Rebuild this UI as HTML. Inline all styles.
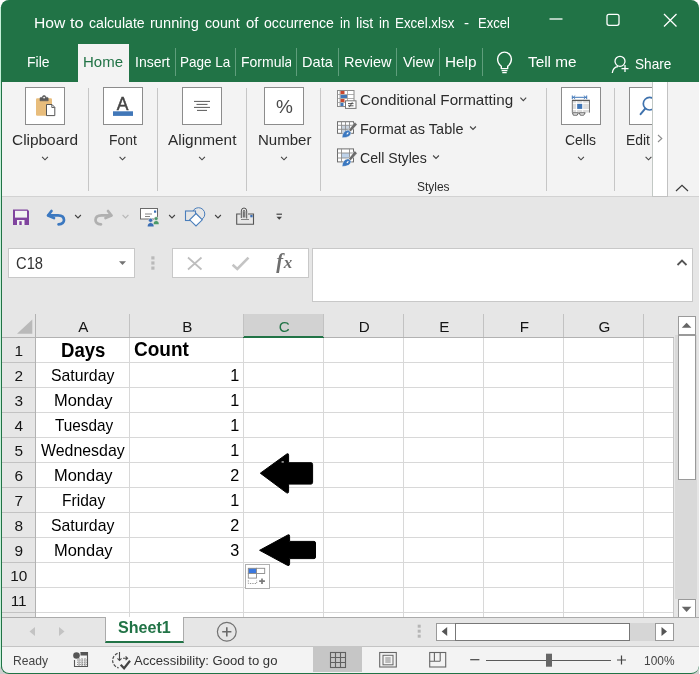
<!DOCTYPE html>
<html><head><meta charset="utf-8">
<style>
*{box-sizing:border-box;margin:0;padding:0}
html,body{width:700px;height:674px;overflow:hidden;background:#fff}
body{font-family:"Liberation Sans",sans-serif;position:relative;color:#222}
.a{position:absolute}
.t{position:absolute;white-space:pre;height:20px;line-height:20px;transform-origin:0 0}
#clip{position:absolute;left:1px;top:0;width:698px;height:674px;border-radius:8px;overflow:hidden;background:#217346}
#win{position:absolute;left:-1px;top:0;width:700px;height:674px;will-change:transform}
#mint{position:absolute;left:0;top:7px;width:2px;height:660px;background:#c4f0d8}
svg{position:absolute;overflow:visible}
</style></head><body>
<div class="a" style="left:0;top:664px;width:10px;height:10px;background:#cfcfcf"></div><div class="a" style="left:690px;top:664px;width:9px;height:10px;background:#cfcfcf"></div><div id="mint"></div><div id="clip"><div id="win">
<div class="t" style="left:34.30px;top:13.23px;font-size:15.20px;color:#fff;transform:scaleX(1.0313);">How</div>
<div class="t" style="left:70.00px;top:13.23px;font-size:15.20px;color:#fff;transform:scaleX(1.0807);">to</div>
<div class="t" style="left:88.90px;top:13.23px;font-size:15.20px;color:#fff;transform:scaleX(0.9284);">calculate</div>
<div class="t" style="left:150.20px;top:13.23px;font-size:15.20px;color:#fff;transform:scaleX(0.9624);">running</div>
<div class="t" style="left:204.60px;top:13.23px;font-size:15.20px;color:#fff;transform:scaleX(0.9333);">count</div>
<div class="t" style="left:245.50px;top:13.23px;font-size:15.20px;color:#fff;transform:scaleX(0.9837);">of</div>
<div class="t" style="left:263.90px;top:13.23px;font-size:15.20px;color:#fff;transform:scaleX(0.9309);">occurrence</div>
<div class="t" style="left:340.00px;top:13.23px;font-size:15.20px;color:#fff;transform:scaleX(0.8541);">in</div>
<div class="t" style="left:356.20px;top:13.23px;font-size:15.20px;color:#fff;transform:scaleX(0.9314);">list</div>
<div class="t" style="left:378.70px;top:13.23px;font-size:15.20px;color:#fff;transform:scaleX(0.8794);">in</div>
<div class="t" style="left:395.20px;top:13.23px;font-size:15.20px;color:#fff;transform:scaleX(0.8792);">Excel.xlsx</div>
<div class="t" style="left:463.90px;top:13.23px;font-size:15.20px;color:#fff;">-</div>
<div class="t" style="left:477.90px;top:13.23px;font-size:15.20px;color:#fff;transform:scaleX(0.8584);">Excel</div>
<svg style="left:540px;top:0" width="160" height="44" viewBox="540 0 160 44">
 <path d="M549.5 19H562.5" stroke="#fff" stroke-width="1.3" fill="none"/>
 <rect x="607" y="14.3" width="12" height="11" rx="2" stroke="#fff" stroke-width="1.3" fill="none"/>
 <path d="M664 14L676.5 26.5M676.5 14L664 26.5" stroke="#fff" stroke-width="1.3" fill="none"/>
</svg>
<div class="a" style="left:78px;top:44px;width:50.5px;height:39px;background:#f3f3f3;"></div>
<div class="t" style="left:27.00px;top:52.20px;font-size:15.00px;color:#fff;transform:scaleX(0.9311);">File</div>
<div class="t" style="left:82.50px;top:52.20px;font-size:15.00px;color:#217346;transform:scaleX(0.9995);">Home</div>
<div class="t" style="left:134.50px;top:52.20px;font-size:15.00px;color:#fff;transform:scaleX(0.9330);">Insert</div>
<div class="t" style="left:180.30px;top:52.20px;font-size:15.00px;color:#fff;transform:scaleX(0.9000);">Page La</div>
<div class="a" style="left:237px;top:44px;width:54.200px;height:36px;overflow:hidden"><div class="t" style="left:3.70px;top:8.20px;font-size:15.00px;color:#fff;transform:scaleX(0.9324);">Formula</div></div>
<div class="t" style="left:301.70px;top:52.20px;font-size:15.00px;color:#fff;transform:scaleX(0.9718);">Data</div>
<div class="t" style="left:343.50px;top:52.20px;font-size:15.00px;color:#fff;transform:scaleX(0.9649);">Review</div>
<div class="t" style="left:402.50px;top:52.20px;font-size:15.00px;color:#fff;transform:scaleX(0.9603);">View</div>
<div class="t" style="left:445.00px;top:52.20px;font-size:15.00px;color:#fff;transform:scaleX(1.0209);">Help</div>
<div class="t" style="left:527.90px;top:52.20px;font-size:15.00px;color:#fff;transform:scaleX(1.0227);">Tell me</div>
<div class="t" style="left:634.60px;top:54.20px;font-size:15.00px;color:#fff;transform:scaleX(0.9095);">Share</div>
<div class="a" style="left:174.5px;top:47.5px;width:1px;height:28.5px;background:#5f9e7c;"></div>
<div class="a" style="left:235px;top:47.5px;width:1px;height:28.5px;background:#5f9e7c;"></div>
<div class="a" style="left:295.5px;top:47.5px;width:1px;height:28.5px;background:#5f9e7c;"></div>
<div class="a" style="left:337.5px;top:47.5px;width:1px;height:28.5px;background:#5f9e7c;"></div>
<div class="a" style="left:396px;top:47.5px;width:1px;height:28.5px;background:#5f9e7c;"></div>
<div class="a" style="left:438.5px;top:47.5px;width:1px;height:28.5px;background:#5f9e7c;"></div>
<div class="a" style="left:482px;top:47.5px;width:1px;height:28.5px;background:#5f9e7c;"></div>
<div class="a" style="left:2px;top:82px;width:697px;height:115px;background:#f3f3f3;"></div>
<div class="a" style="left:2px;top:196px;width:697px;height:1px;background:#d2d2d2;"></div>
<div class="a" style="left:25px;top:87px;width:40px;height:38px;background:#fff;border:1px solid #8c8c8c"></div>
<div class="a" style="left:103px;top:87px;width:40px;height:38px;background:#fff;border:1px solid #8c8c8c"></div>
<div class="a" style="left:182px;top:87px;width:40px;height:38px;background:#fff;border:1px solid #8c8c8c"></div>
<div class="a" style="left:264px;top:87px;width:40px;height:38px;background:#fff;border:1px solid #8c8c8c"></div>
<div class="a" style="left:561px;top:87px;width:40px;height:38px;background:#fff;border:1px solid #8c8c8c"></div>
<div class="a" style="left:629px;top:87px;width:30px;height:38px;background:#fff;border:1px solid #8c8c8c;border-right:none"></div>
<div class="t" style="left:12.00px;top:130.01px;font-size:14.40px;color:#2b2b2b;transform:scaleX(1.0709);">Clipboard</div>
<div class="t" style="left:108.80px;top:130.01px;font-size:14.40px;color:#2b2b2b;transform:scaleX(0.9648);">Font</div>
<div class="t" style="left:167.50px;top:130.01px;font-size:14.40px;color:#2b2b2b;transform:scaleX(1.0697);">Alignment</div>
<div class="t" style="left:257.50px;top:130.01px;font-size:14.40px;color:#2b2b2b;transform:scaleX(1.0445);">Number</div>
<div class="t" style="left:565.00px;top:130.01px;font-size:14.40px;color:#2b2b2b;transform:scaleX(0.9684);">Cells</div>
<div class="t" style="left:626.00px;top:130.01px;font-size:14.40px;color:#2b2b2b;transform:scaleX(0.9673);">Edit</div>
<div class="a" style="left:88px;top:88px;width:1px;height:103px;background:#c6c6c6;"></div>
<div class="a" style="left:156.5px;top:88px;width:1px;height:103px;background:#c6c6c6;"></div>
<div class="a" style="left:245.5px;top:88px;width:1px;height:103px;background:#c6c6c6;"></div>
<div class="a" style="left:320px;top:88px;width:1px;height:103px;background:#c6c6c6;"></div>
<div class="a" style="left:545.5px;top:88px;width:1px;height:103px;background:#c6c6c6;"></div>
<div class="a" style="left:613.5px;top:88px;width:1px;height:103px;background:#c6c6c6;"></div>
<div class="t" style="left:360.20px;top:89.81px;font-size:14.40px;color:#2b2b2b;transform:scaleX(1.0574);">Conditional Formatting</div>
<div class="t" style="left:360.20px;top:118.71px;font-size:14.40px;color:#2b2b2b;transform:scaleX(1.0051);">Format as Table</div>
<div class="t" style="left:360.20px;top:147.81px;font-size:14.40px;color:#2b2b2b;transform:scaleX(0.9820);">Cell Styles</div>
<div class="t" style="left:416.90px;top:176.86px;font-size:12.80px;color:#2b2b2b;transform:scaleX(0.9353);">Styles</div>
<svg style="left:0;top:80px" width="700" height="120" viewBox="0 80 700 120"><rect x="36" y="98.3" width="16" height="17.5" rx="1.2" fill="#e8bd7c"/><path d="M40 100.8V98.2Q40 97.4 40.8 97.4H42.3Q42.3 95.4 44.1 95.4Q45.9 95.4 45.9 97.4H47.4Q48.2 97.4 48.2 98.2V100.8Z" fill="#5a5a5a" stroke="#5a5a5a" stroke-width="0.6"/><circle cx="44.1" cy="97.6" r="0.9" fill="#fff"/><path d="M46.5 104.5H52L54.8 107.3V115.6H46.5Z" fill="#fff" stroke="#555" stroke-width="1"/><path d="M51.8 104.6V107.5H54.7" fill="none" stroke="#555" stroke-width="0.9"/><rect x="113" y="111.3" width="20" height="4.6" fill="#4177b8"/><path d="M194 101.4H210" stroke="#595959" stroke-width="1"/><path d="M196.5 104.4H207.5" stroke="#595959" stroke-width="1"/><path d="M194 107.4H210" stroke="#595959" stroke-width="1"/><path d="M197 110.4H207" stroke="#595959" stroke-width="1"/><path d="M42.1 156.8L45.0 159.8L47.9 156.8" stroke="#444" stroke-width="1.1" fill="none"/><path d="M119.6 156.8L122.5 159.8L125.4 156.8" stroke="#444" stroke-width="1.1" fill="none"/><path d="M199.1 156.8L202.0 159.8L204.9 156.8" stroke="#444" stroke-width="1.1" fill="none"/><path d="M281.1 156.8L284.0 159.8L286.9 156.8" stroke="#444" stroke-width="1.1" fill="none"/><path d="M578.1 156.8L581.0 159.8L583.9 156.8" stroke="#444" stroke-width="1.1" fill="none"/><path d="M645.6 156.8L648.5 159.8L651.4 156.8" stroke="#444" stroke-width="1.1" fill="none"/><path d="M520.4 97.7L523.3 100.7L526.2 97.7" stroke="#444" stroke-width="1.1" fill="none"/><path d="M470.1 126.5L473.0 129.5L475.9 126.5" stroke="#444" stroke-width="1.1" fill="none"/><path d="M433.1 155.5L436.0 158.5L438.9 155.5" stroke="#444" stroke-width="1.1" fill="none"/><rect x="337.5" y="90.5" width="16.5" height="16" fill="#fff" stroke="#8a8a8a" stroke-width="1"/><path d="M337.5 94.5H354M337.5 98.5H354M337.5 102.5H354M340 90.5V106.5M347.5 90.5V106.5" stroke="#9a9a9a" stroke-width="0.8" fill="none"/><rect x="340.5" y="91" width="4" height="3" fill="#c9472f"/><rect x="340.5" y="95" width="6.5" height="3" fill="#4177b8"/><rect x="340.5" y="99" width="4" height="3" fill="#c9472f"/><rect x="340.5" y="103" width="3" height="3" fill="#4177b8"/><rect x="345.5" y="100.8" width="10.5" height="7.6" fill="#fff" stroke="#777" stroke-width="1"/><path d="M348 103.6H353.5M348 105.8H353.5M352.3 102.3L349.3 107.1" stroke="#444" stroke-width="0.9"/><rect x="337.5" y="121.700" width="16" height="11.600" fill="#fff" stroke="#6e6e6e" stroke-width="1"/><rect x="341.500" y="125.300" width="8" height="8" fill="#c9d3df"/><path d="M337.500 125.300H353.500M337.500 129.300H353.500M341.500 121.700V133.300M345.500 121.700V133.300M349.500 121.700V133.300" stroke="#8c8c8c" stroke-width="0.900" fill="none"/><path d="M357.2 124.6L354.800 122.0L348.700 130.0L350.700 131.8Z" fill="#6b6b6b" stroke="#f3f3f3" stroke-width="0.500"/><path d="M351.100 132.4Q351 137.8 342 137.8Q342.600 130.6 348.200 130.0Z" fill="#3b78c0" stroke="#f3f3f3" stroke-width="0.500"/><ellipse cx="347.600" cy="133.4" rx="0.700" ry="1.300" transform="rotate(40 347.600 133.4)" fill="#fff"/><rect x="337.500" y="148.900" width="16" height="13" fill="#fff" stroke="#6e6e6e" stroke-width="1"/><rect x="341.500" y="153" width="8" height="5" fill="#bfd3ea"/><path d="M337.500 153H353.500M337.500 158H353.500M341.500 148.900V161.900M349.500 148.900V161.900" stroke="#8c8c8c" stroke-width="0.900" fill="none"/><path d="M357.2 153.3L354.800 150.7L348.700 158.7L350.700 160.5Z" fill="#6b6b6b" stroke="#f3f3f3" stroke-width="0.500"/><path d="M351.100 161.1Q351 166.5 342 166.5Q342.600 159.3 348.200 158.7Z" fill="#3b78c0" stroke="#f3f3f3" stroke-width="0.500"/><ellipse cx="347.600" cy="162.1" rx="0.700" ry="1.300" transform="rotate(40 347.600 162.1)" fill="#fff"/><path d="M572.3 97.3H586.7M572.3 95.5V99.1M586.7 95.5V99.1" stroke="#4177b8" stroke-width="1" fill="none"/><path d="M575.2 95.7L573.2 97.3L575.2 98.9M583.8 95.7L585.8 97.3L583.8 98.9" stroke="#4177b8" stroke-width="0.9" fill="none"/><rect x="572.3" y="100.6" width="17.2" height="12" fill="#dedede"/><path d="M576.6 100.6V112.600M582.700 100.600V112.600M572.300 103.300H589.500M572.300 109.500H589.500" stroke="#fff" stroke-width="1" fill="none"/><rect x="577.2" y="103.9" width="5" height="5" fill="#4177b8"/><path d="M572.3 112.6V100.500H589.500V112.600" fill="none" stroke="#777" stroke-width="1"/><path d="M572 100.400H589.800" stroke="#5a5a5a" stroke-width="1.300"/><path d="M572.5 112.800H578.500L577.200 115.200H573.300Z M579.300 112.800H585.200L583.700 115.200H580.300Z" fill="#f3f3f3" stroke="#555" stroke-width="0.900"/><circle cx="649.6" cy="103.7" r="6.3" fill="none" stroke="#3f72ad" stroke-width="1.7"/><path d="M645.2 108.700L640.600 114.200" stroke="#3f72ad" stroke-width="2" stroke-linecap="round"/></svg>
<div class="t" style="left:116.80px;top:93.54px;font-size:17.50px;color:#444;-webkit-text-stroke:0.45px #444;">A</div>
<div class="t" style="left:276.00px;top:96.92px;font-size:19.00px;color:#4a4a4a;">%</div>
<div class="a" style="left:652px;top:82px;width:15.5px;height:115px;background:#fff;border-left:1px solid #c2c8c4;border-right:1px solid #c2c2c2;border-bottom:1px solid #c2c2c2"></div>
<svg style="left:640px;top:80px" width="60" height="120" viewBox="640 80 60 120"><path d="M658 135L661.8 138.5L658 142" stroke="#8a8a8a" stroke-width="1.1" fill="none"/><path d="M676 191L682 185.3L688 191" stroke="#3a3a3a" stroke-width="1.2" fill="none"/></svg>
<svg style="left:480px;top:44px" width="160" height="38" viewBox="480 44 160 38"><path d="M501.300 68.600V66.300Q497.600 63.500 497.600 59A6.900 6.900 0 0 1 511.400 59Q511.400 63.500 507.700 66.300V68.600Z" fill="none" stroke="#fff" stroke-width="1.400" stroke-linejoin="round"/><path d="M501.600 70.700H507.400M502.300 72.600H506.700" stroke="#fff" stroke-width="1.200"/><circle cx="620" cy="61.3" r="5" fill="none" stroke="#fff" stroke-width="1.3"/><path d="M612.3 73Q613 67 618 66.600" fill="none" stroke="#fff" stroke-width="1.3"/><path d="M621.5 68.600H628.5M625 65.100V72.100" stroke="#fff" stroke-width="1.3"/></svg>
<div class="a" style="left:2px;top:197px;width:697px;height:449px;background:#e6e6e6;"></div>
<svg style="left:0;top:200px" width="300" height="40" viewBox="0 200 300 40"><path d="M13 209.500H27.500L29 211V225H13Z" fill="#80449e"/><rect x="15" y="210.800" width="12" height="6.800" fill="#f2f2f2"/><rect x="17" y="220" width="7.500" height="5" fill="#f2f2f2"/><rect x="19.300" y="221.200" width="2.400" height="3.800" fill="#80449e"/><path d="M51.500 211L48 215.500L54 218" fill="none" stroke="#3b78c0" stroke-width="2.700" stroke-linejoin="round" stroke-linecap="round"/><path d="M48.500 215.300H58Q64 215.300 64 220Q64 224 58.500 224.300" fill="none" stroke="#3b78c0" stroke-width="2.700" stroke-linecap="round"/><path d="M75.1 215.0L78.0 218.0L80.9 215.0" stroke="#444" stroke-width="1.1" fill="none"/><path d="M108 211L111.500 215.500L105.500 218" fill="none" stroke="#b0b0b0" stroke-width="2.700" stroke-linejoin="round" stroke-linecap="round"/><path d="M111 215.300H101.500Q95.500 215.300 95.500 220Q95.500 224 101 224.300" fill="none" stroke="#b0b0b0" stroke-width="2.700" stroke-linecap="round"/><path d="M122.6 215.0L125.5 218.0L128.4 215.0" stroke="#b8b8b8" stroke-width="1.1" fill="none"/><rect x="140.500" y="208.500" width="17" height="10.500" fill="#fff" stroke="#6a6a6a" stroke-width="1"/><rect x="154" y="210.500" width="2.200" height="2.200" fill="#3b6eb5"/><path d="M145 214H152M145 216.500H150" stroke="#777" stroke-width="0.900"/><circle cx="150.600" cy="220.300" r="2.100" fill="#3b6eb5" stroke="#e6e6e6" stroke-width="0.600"/><path d="M147.600 226.500Q147.600 222.900 150.600 222.900Q153.700 222.900 153.700 226.500Z" fill="#3b6eb5"/><circle cx="156.100" cy="218.600" r="1.900" fill="#4c9a6a" stroke="#e6e6e6" stroke-width="0.600"/><path d="M153.600 224.200Q153.600 221 156.100 221Q158.800 221 158.800 224.200Z" fill="#4c9a6a"/><path d="M169.1 215.0L172.0 218.0L174.9 215.0" stroke="#444" stroke-width="1.1" fill="none"/><circle cx="198.500" cy="214" r="6.300" fill="none" stroke="#4a7ebb" stroke-width="1"/><rect x="185.500" y="211" width="10" height="9.500" fill="#e6e6e6" stroke="#4a7ebb" stroke-width="1.100"/><path d="M196 213.500L202.300 219.800L196 226L189.700 219.800Z" fill="#fff" stroke="#4a7ebb" stroke-width="1.100"/><path d="M215.1 215.0L218.0 218.0L220.9 215.0" stroke="#444" stroke-width="1.1" fill="none"/><path d="M240.500 214H236.700V224.300H253.500V214H248" fill="none" stroke="#555" stroke-width="1.100"/><path d="M241 219.500H249" stroke="#777" stroke-width="0.900"/><rect x="250.300" y="215" width="2.300" height="2.300" fill="#3b6eb5"/><path d="M241.300 218V211Q241.300 208 244 208Q246.700 208 246.700 211V218.500M243.300 217.500V211.500Q243.300 210.300 244 210.300Q244.800 210.300 244.800 211.500V217.500" fill="none" stroke="#555" stroke-width="1"/><path d="M276.500 214.200H282" stroke="#444" stroke-width="1.200"/><path d="M276.500 216.700L279.250 219.700L282 216.700Z" fill="#444"/></svg>
<div class="a" style="left:8px;top:248px;width:127px;height:30px;background:#fff;border:1px solid #c8c8c8"></div>
<div class="t" style="left:15.50px;top:253.66px;font-size:16.00px;color:#333;transform:scaleX(0.9201);">C18</div>
<div class="a" style="left:172px;top:248px;width:137px;height:30px;background:#fff;border:1px solid #c8c8c8"></div>
<div class="a" style="left:312px;top:248px;width:381px;height:54px;background:#fff;border:1px solid #c8c8c8"></div>
<svg style="left:100px;top:245px" width="600" height="40" viewBox="100 245 600 40"><path d="M119 261.300L122.500 265L126 261.300Z" fill="#737373"/><rect x="151.300" y="256.3" width="3.200" height="3.200" fill="#b9b9b9"/><rect x="151.300" y="261.4" width="3.200" height="3.200" fill="#b9b9b9"/><rect x="151.300" y="266.5" width="3.200" height="3.200" fill="#b9b9b9"/><path d="M188 257.500L201.500 269.500M201.500 257.500L188 269.500" stroke="#bebebe" stroke-width="1.700" fill="none"/><path d="M232.600 264.800L237.300 269L248.500 257.600" stroke="#c4c4c4" stroke-width="2.600" fill="none"/><path d="M677.500 265L682 260.500L686.500 265" stroke="#555" stroke-width="1.800" fill="none"/></svg>
<div class="t" style="left:276.30px;top:251.38px;font-size:20.50px;color:#6e6e6e;font-weight:bold;font-family:'Liberation Serif',serif;font-style:italic;">f</div>
<div class="t" style="left:283.82px;top:252.86px;font-size:17.00px;color:#6e6e6e;font-weight:bold;font-family:'Liberation Serif',serif;font-style:italic;">x</div>
<div class="a" style="left:2px;top:338px;width:672px;height:279px;background:#fff;"></div>
<div class="a" style="left:2px;top:338px;width:33px;height:279px;background:#e6e6e6;"></div>
<div class="a" style="left:243.3px;top:314px;width:80.7px;height:23px;background:#d2d2d2;"></div>
<div class="a" style="left:2px;top:337px;width:672px;height:1px;background:#b2b2b2;"></div>
<div class="a" style="left:243.3px;top:335.8px;width:80.7px;height:2px;background:#217346;"></div>
<div class="a" style="left:35px;top:314px;width:1px;height:303px;background:#b2b2b2;"></div>
<div class="a" style="left:129px;top:314px;width:1px;height:23px;background:#c2c2c2;"></div>
<div class="a" style="left:129px;top:338px;width:1px;height:279px;background:#d8d8d8;"></div>
<div class="t" style="left:78.23px;top:317.03px;font-size:15.20px;color:#151515;">A</div>
<div class="a" style="left:243px;top:314px;width:1px;height:23px;background:#c2c2c2;"></div>
<div class="a" style="left:243px;top:338px;width:1px;height:279px;background:#d8d8d8;"></div>
<div class="t" style="left:182.23px;top:317.03px;font-size:15.20px;color:#151515;">B</div>
<div class="a" style="left:323px;top:314px;width:1px;height:23px;background:#c2c2c2;"></div>
<div class="a" style="left:323px;top:338px;width:1px;height:279px;background:#d8d8d8;"></div>
<div class="t" style="left:278.81px;top:317.03px;font-size:15.20px;color:#217346;">C</div>
<div class="a" style="left:403px;top:314px;width:1px;height:23px;background:#c2c2c2;"></div>
<div class="a" style="left:403px;top:338px;width:1px;height:279px;background:#d8d8d8;"></div>
<div class="t" style="left:358.81px;top:317.03px;font-size:15.20px;color:#151515;">D</div>
<div class="a" style="left:483px;top:314px;width:1px;height:23px;background:#c2c2c2;"></div>
<div class="a" style="left:483px;top:338px;width:1px;height:279px;background:#d8d8d8;"></div>
<div class="t" style="left:439.23px;top:317.03px;font-size:15.20px;color:#151515;">E</div>
<div class="a" style="left:563px;top:314px;width:1px;height:23px;background:#c2c2c2;"></div>
<div class="a" style="left:563px;top:338px;width:1px;height:279px;background:#d8d8d8;"></div>
<div class="t" style="left:519.66px;top:317.03px;font-size:15.20px;color:#151515;">F</div>
<div class="a" style="left:643px;top:314px;width:1px;height:23px;background:#c2c2c2;"></div>
<div class="a" style="left:643px;top:338px;width:1px;height:279px;background:#d8d8d8;"></div>
<div class="t" style="left:598.39px;top:317.03px;font-size:15.20px;color:#151515;">G</div>
<div class="a" style="left:2px;top:362px;width:33px;height:1px;background:#c2c2c2;"></div>
<div class="a" style="left:36px;top:362px;width:638px;height:1px;background:#d8d8d8;"></div>
<div class="t" style="left:14.42px;top:341.06px;font-size:15.40px;color:#151515;">1</div>
<div class="a" style="left:2px;top:387px;width:33px;height:1px;background:#c2c2c2;"></div>
<div class="a" style="left:36px;top:387px;width:638px;height:1px;background:#d8d8d8;"></div>
<div class="t" style="left:14.42px;top:366.06px;font-size:15.40px;color:#151515;">2</div>
<div class="a" style="left:2px;top:412px;width:33px;height:1px;background:#c2c2c2;"></div>
<div class="a" style="left:36px;top:412px;width:638px;height:1px;background:#d8d8d8;"></div>
<div class="t" style="left:14.42px;top:391.06px;font-size:15.40px;color:#151515;">3</div>
<div class="a" style="left:2px;top:437px;width:33px;height:1px;background:#c2c2c2;"></div>
<div class="a" style="left:36px;top:437px;width:638px;height:1px;background:#d8d8d8;"></div>
<div class="t" style="left:14.42px;top:416.06px;font-size:15.40px;color:#151515;">4</div>
<div class="a" style="left:2px;top:462px;width:33px;height:1px;background:#c2c2c2;"></div>
<div class="a" style="left:36px;top:462px;width:638px;height:1px;background:#d8d8d8;"></div>
<div class="t" style="left:14.42px;top:441.06px;font-size:15.40px;color:#151515;">5</div>
<div class="a" style="left:2px;top:487px;width:33px;height:1px;background:#c2c2c2;"></div>
<div class="a" style="left:36px;top:487px;width:638px;height:1px;background:#d8d8d8;"></div>
<div class="t" style="left:14.42px;top:466.06px;font-size:15.40px;color:#151515;">6</div>
<div class="a" style="left:2px;top:512px;width:33px;height:1px;background:#c2c2c2;"></div>
<div class="a" style="left:36px;top:512px;width:638px;height:1px;background:#d8d8d8;"></div>
<div class="t" style="left:14.42px;top:491.06px;font-size:15.40px;color:#151515;">7</div>
<div class="a" style="left:2px;top:537px;width:33px;height:1px;background:#c2c2c2;"></div>
<div class="a" style="left:36px;top:537px;width:638px;height:1px;background:#d8d8d8;"></div>
<div class="t" style="left:14.42px;top:516.06px;font-size:15.40px;color:#151515;">8</div>
<div class="a" style="left:2px;top:562px;width:33px;height:1px;background:#c2c2c2;"></div>
<div class="a" style="left:36px;top:562px;width:638px;height:1px;background:#d8d8d8;"></div>
<div class="t" style="left:14.42px;top:541.06px;font-size:15.40px;color:#151515;">9</div>
<div class="a" style="left:2px;top:587px;width:33px;height:1px;background:#c2c2c2;"></div>
<div class="a" style="left:36px;top:587px;width:638px;height:1px;background:#d8d8d8;"></div>
<div class="t" style="left:10.14px;top:566.06px;font-size:15.40px;color:#151515;">10</div>
<div class="a" style="left:2px;top:612px;width:33px;height:1px;background:#c2c2c2;"></div>
<div class="a" style="left:36px;top:612px;width:638px;height:1px;background:#d8d8d8;"></div>
<div class="t" style="left:10.71px;top:591.06px;font-size:15.40px;color:#151515;transform:scaleX(1.0000);">11</div>
<div class="a" style="left:673px;top:338px;width:1px;height:279px;background:#c8c8c8;"></div>
<svg style="left:16px;top:319px" width="17" height="16" viewBox="0 0 17 16"><path d="M16.3 0.5V14.7H1Z" fill="#b9b9b9"/></svg>
<div class="t" style="left:61.20px;top:340.27px;font-size:20.00px;color:#000;transform:scaleX(0.9285);font-weight:bold;">Days</div>
<div class="t" style="left:133.50px;top:338.87px;font-size:20.00px;color:#000;transform:scaleX(0.9505);font-weight:bold;">Count</div>
<div class="t" style="left:51.40px;top:365.29px;font-size:16.20px;color:#000;transform:scaleX(0.9779);">Saturday</div>
<div class="t" style="left:230.29px;top:365.29px;font-size:16.20px;color:#000;">1</div>
<div class="t" style="left:54.20px;top:390.29px;font-size:16.20px;color:#000;transform:scaleX(1.0167);">Monday</div>
<div class="t" style="left:230.29px;top:390.29px;font-size:16.20px;color:#000;">1</div>
<div class="t" style="left:54.50px;top:415.29px;font-size:16.20px;color:#000;transform:scaleX(0.9475);">Tuesday</div>
<div class="t" style="left:230.29px;top:415.29px;font-size:16.20px;color:#000;">1</div>
<div class="t" style="left:40.80px;top:440.29px;font-size:16.20px;color:#000;transform:scaleX(0.9829);">Wednesday</div>
<div class="t" style="left:230.29px;top:440.29px;font-size:16.20px;color:#000;">1</div>
<div class="t" style="left:54.20px;top:465.29px;font-size:16.20px;color:#000;transform:scaleX(1.0167);">Monday</div>
<div class="t" style="left:230.29px;top:465.29px;font-size:16.20px;color:#000;">2</div>
<div class="t" style="left:61.70px;top:490.29px;font-size:16.20px;color:#000;transform:scaleX(0.9621);">Friday</div>
<div class="t" style="left:230.29px;top:490.29px;font-size:16.20px;color:#000;">1</div>
<div class="t" style="left:51.40px;top:515.29px;font-size:16.20px;color:#000;transform:scaleX(0.9779);">Saturday</div>
<div class="t" style="left:230.29px;top:515.29px;font-size:16.20px;color:#000;">2</div>
<div class="t" style="left:54.20px;top:540.29px;font-size:16.20px;color:#000;transform:scaleX(1.0167);">Monday</div>
<div class="t" style="left:230.29px;top:540.29px;font-size:16.20px;color:#000;">3</div>
<svg style="left:250px;top:445px" width="80" height="130" viewBox="250 445 80 130"><path d="M260.300 473.200L286.800 454Q288.600 452.900 288.600 455.200V462.700H311Q312.600 462.700 312.600 464.500V482.300Q312.600 484.100 311 484.100H288.600V491.300Q288.600 494 286.300 492.600Z" fill="#000" stroke="#000" stroke-width="1" stroke-linejoin="round"/><rect x="281.600" y="461.400" width="2.200" height="1.100" fill="#e8e8e8"/><path d="M259.600 550.300L287.800 535Q289.600 534 289.600 536.300V541.400H314Q315.500 541.400 315.500 543V557Q315.500 558.600 314 558.600H289.600V563.800Q289.600 566.500 287.200 565.200Z" fill="#000" stroke="#000" stroke-width="1" stroke-linejoin="round"/></svg>
<div class="a" style="left:245px;top:564px;width:25px;height:25px;background:#fff;border:1px solid #b0b0b0"></div>
<svg style="left:245px;top:564px" width="25" height="25" viewBox="245 564 25 25"><rect x="248.300" y="568.300" width="8.200" height="5.200" fill="#3b78de" stroke="#8a8a8a" stroke-width="0.900"/><rect x="256.500" y="568.300" width="8.200" height="5.200" fill="#fff" stroke="#8a8a8a" stroke-width="0.900"/><rect x="248.300" y="573.500" width="8.200" height="4.600" fill="#fff" stroke="#8a8a8a" stroke-width="0.900"/><path d="M248.300 580.300V583.500H256.700V580.300" fill="none" stroke="#8a8a8a" stroke-width="0.900" stroke-dasharray="1.300 1.100"/><path d="M259.200 581.200H264.900M262 578.400V584" stroke="#7a7a7a" stroke-width="1.700"/></svg>
<div class="a" style="left:674px;top:314px;width:25px;height:304px;background:#e6e6e6;"></div>
<div class="a" style="left:675px;top:335px;width:22px;height:264px;background:#d9d9d9;"></div>
<div class="a" style="left:677.5px;top:316px;width:18px;height:19px;background:#fff;border:1px solid #9a9a9a"></div>
<div class="a" style="left:677.5px;top:335px;width:18px;height:145px;background:#fff;border:1px solid #9a9a9a"></div>
<div class="a" style="left:677.5px;top:599px;width:18px;height:19px;background:#fff;border:1px solid #9a9a9a"></div>
<svg style="left:677px;top:316px" width="19" height="302" viewBox="677 316 19 302"><path d="M681.800 327.800L686.600 322.700L691.400 327.800Z" fill="#666"/><path d="M681.800 606.800L686.600 612L691.400 606.800Z" fill="#666"/></svg>
<div class="a" style="left:2px;top:617px;width:697px;height:1px;background:#ababab;"></div>
<div class="a" style="left:105.3px;top:617px;width:78.7px;height:25.7px;background:#fff;border-left:1px solid #ababab;border-right:1px solid #ababab;border-bottom:2.7px solid #217346"></div>
<div class="t" style="left:117.80px;top:618.33px;font-size:15.80px;color:#217346;transform:scaleX(1.0191);font-weight:bold;">Sheet1</div>
<svg style="left:25px;top:622px" width="45" height="20" viewBox="25 622 45 20"><path d="M35 627V636L29.5 631.5Z" fill="#c3c3c3"/><path d="M59 627V636L64.5 631.5Z" fill="#c3c3c3"/></svg>
<svg style="left:215px;top:620px" width="24" height="24" viewBox="215 620 24 24"><circle cx="226.800" cy="631.800" r="9.400" fill="none" stroke="#727272" stroke-width="1.200"/><path d="M222.200 631.800H231.400M226.800 627.200V636.400" stroke="#6a6a6a" stroke-width="1.600"/></svg>
<div class="a" style="left:436px;top:622.5px;width:238px;height:18px;background:#d6d6d6;"></div>
<div class="a" style="left:436px;top:622.5px;width:19.5px;height:18px;background:#fff;border:1px solid #9a9a9a"></div>
<div class="a" style="left:455px;top:622.5px;width:175px;height:18px;background:#fff;border:1px solid #777"></div>
<div class="a" style="left:655px;top:622.5px;width:19px;height:18px;background:#fff;border:1px solid #9a9a9a"></div>
<svg style="left:415px;top:620px" width="260" height="24" viewBox="415 620 260 24"><path d="M447.200 627V636L441.700 631.500Z" fill="#555"/><path d="M661.5 627V636L667 631.5Z" fill="#555"/><rect x="417.7" y="624.7" width="3" height="3" fill="#b5b5b5"/><rect x="417.7" y="629.7" width="3" height="3" fill="#b5b5b5"/><rect x="417.7" y="634.7" width="3" height="3" fill="#b5b5b5"/></svg>
<div class="a" style="left:2px;top:646px;width:697px;height:28px;background:#f3f3f3;"></div>
<div class="a" style="left:2px;top:646px;width:697px;height:1px;background:#c4c4c4;"></div>
<div class="a" style="left:313px;top:646px;width:49px;height:26px;background:#c6c6c6;"></div>
<div class="t" style="left:12.50px;top:651.26px;font-size:13.10px;color:#444;transform:scaleX(0.9242);">Ready</div>
<div class="t" style="left:134.00px;top:651.26px;font-size:13.10px;color:#333;transform:scaleX(1.0004);">Accessibility: Good to go</div>
<div class="t" style="left:644.00px;top:651.26px;font-size:13.10px;color:#444;transform:scaleX(0.9102);">100%</div>
<svg style="left:0;top:645px" width="700" height="29" viewBox="0 645 700 29"><circle cx="76.500" cy="655.500" r="3.300" fill="#555"/><path d="M80.500 652.500H87.500V666.500H74.500V660" fill="none" stroke="#555" stroke-width="1.100"/><rect x="80.500" y="652.500" width="7" height="3" fill="#555"/><path d="M77 660H87M77 662.300H87M77 664.500H87M79 658V666M82 658V666M85 658V666" stroke="#777" stroke-width="0.800" fill="none" stroke-dasharray="1.500 0.800"/><path d="M117.600 653.400A7.500 7.500 0 0 0 118.600 667.800" fill="none" stroke="#4a4a4a" stroke-width="1.200" stroke-dasharray="3 1.400"/><path d="M119.500 652V660.300M117.500 658.300L119.500 660.500L121.500 658.300" fill="none" stroke="#4a4a4a" stroke-width="1.100"/><path d="M123 658.250H127.300M125.600 656.300L127.600 658.250L125.600 660.200" fill="none" stroke="#4a4a4a" stroke-width="1.100"/><path d="M120.700 664.700L124.100 668.300L130 660.800" fill="none" stroke="#444" stroke-width="2.200"/><rect x="330.500" y="652.500" width="15" height="15" fill="none" stroke="#606060" stroke-width="1.100"/><path d="M330.500 657.500H345.500M330.500 662.500H345.500M335.500 652.500V667.500M340.500 652.500V667.500" stroke="#606060" stroke-width="1.100"/><rect x="379.700" y="652.500" width="16.600" height="14.500" fill="none" stroke="#666" stroke-width="1.100"/><rect x="383" y="655.300" width="10" height="9.500" fill="none" stroke="#666" stroke-width="1"/><path d="M385.300 658H390.700M385.300 660H390.700M385.300 662H390.700" stroke="#666" stroke-width="0.800"/><rect x="429.700" y="652.500" width="16" height="14.500" fill="none" stroke="#666" stroke-width="1.100"/><path d="M434.400 652.500V661.300M429.700 661.300H440.200M440.200 652.500V661.300" fill="none" stroke="#666" stroke-width="1.100"/><path d="M470.200 659.700H479.400" stroke="#444" stroke-width="1.200"/><path d="M486 660.500H611" stroke="#5a5a5a" stroke-width="1"/><rect x="546" y="653.700" width="6" height="13" fill="#666"/><path d="M617 660H626M621.500 655.500V664.500" stroke="#444" stroke-width="1.200"/></svg>
<div class="a" style="left:1px;top:0;width:698px;height:674px;border-left:1px solid #217346;border-bottom:1.4px solid #217346;border-radius:8px;pointer-events:none"></div>
</div></div>
</body></html>
